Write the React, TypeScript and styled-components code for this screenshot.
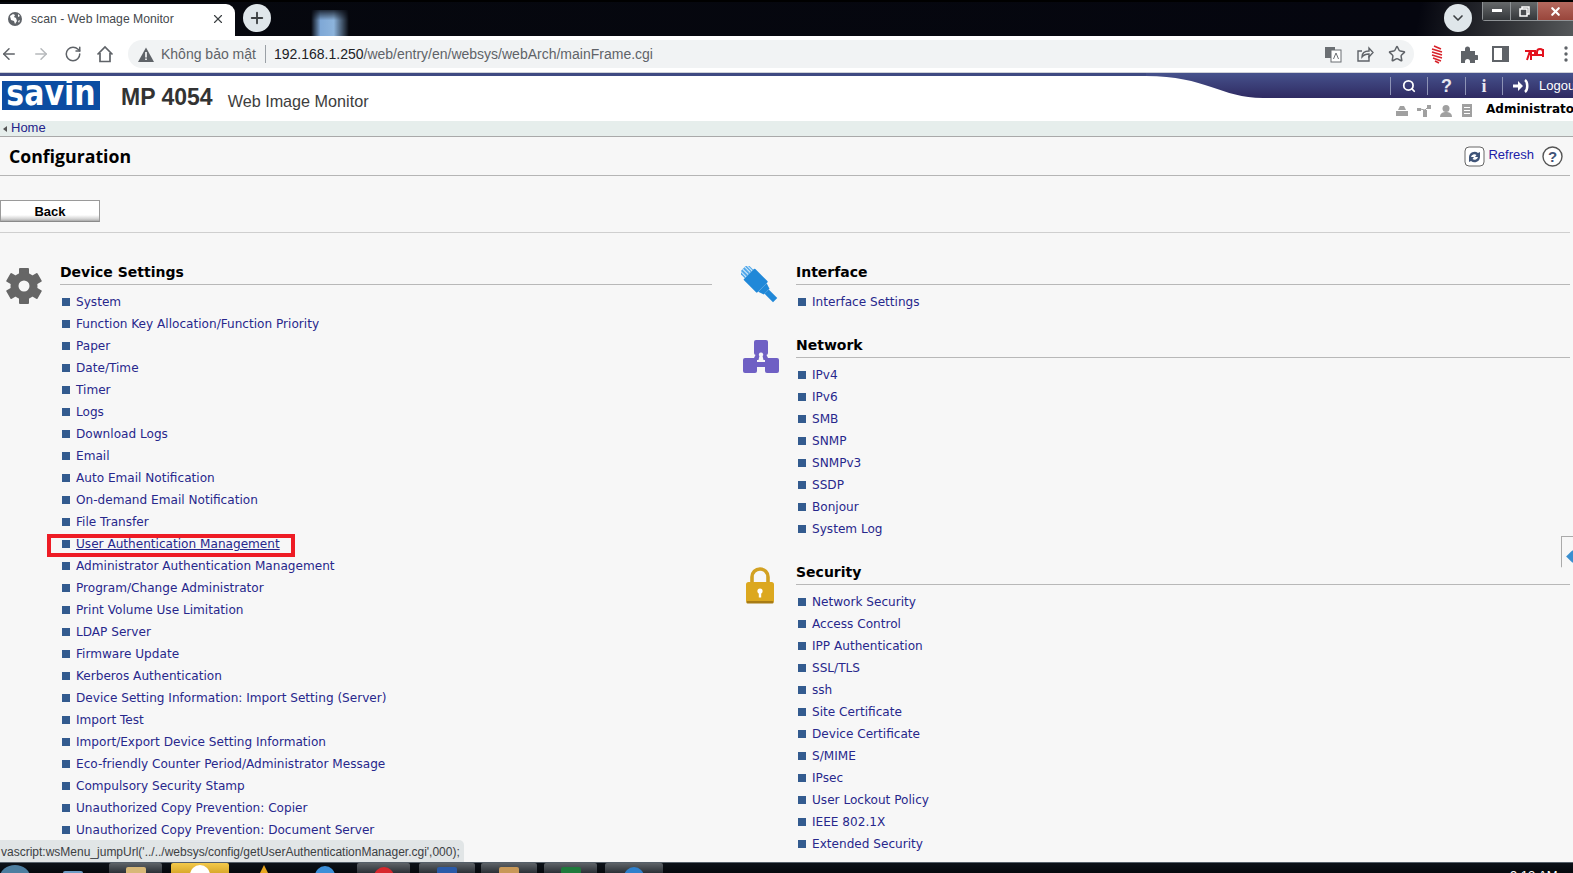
import React from "react";
import styled, { createGlobalStyle } from "styled-components";
import { ArrowLeft, ArrowRight, RotateCw, Star, X, Plus, ChevronDown, Search } from "lucide-react";

const Global = createGlobalStyle`
  html, body { margin: 0; padding: 0; background: #f7f7f7; }
  * { box-sizing: border-box; }
`;

const Screen = styled.div`
  position: relative;
  width: 1573px;
  height: 873px;
  overflow: hidden;
  display: flex;
  flex-direction: column;
  background: #f7f7f7;
  font-family: "DejaVu Sans", sans-serif;
`;

/* ---------- browser chrome ---------- */
const TabStrip = styled.div`
  position: relative;
  flex: 0 0 36px;
  display: flex;
  align-items: flex-end;
  background: linear-gradient(100deg, #06080e 0%, #05060f 90%, #3b3d40 97%, #55585a 100%);
  border-top: 2px solid #000;
`;
const Tab = styled.div`
  width: 235px;
  height: 32px;
  background: #fff;
  border-radius: 0 9px 0 0;
  display: flex;
  align-items: center;
  padding: 0 10px 2px 8px;
  gap: 9px;
  color: #45494d;
  font: 12.2px "Liberation Sans", sans-serif;
`;
const TabTitle = styled.span`
  flex: 1;
`;
const RoundButton = styled.div`
  width: 28px;
  height: 28px;
  border-radius: 50%;
  background: #dfe6ea;
  color: #3c4043;
  display: flex;
  align-items: center;
  justify-content: center;
  flex: none;
`;
const NewTab = styled(RoundButton)`
  margin: 0 0 4px 8px;
`;
const Smear = styled.div`
  width: 38px;
  height: 26px;
  margin-left: 40px;
  background: linear-gradient(90deg, rgba(60, 90, 130, 0) 0%, #7fa8d6 25%, #8db4dc 60%, rgba(60, 90, 130, 0) 100%);
  -webkit-mask-image: linear-gradient(rgba(0, 0, 0, 0.2), #000 40%);
  mask-image: linear-gradient(rgba(0, 0, 0, 0.2), #000 40%);
`;
const TabSpacer = styled.div`
  flex: 1;
`;
const CollapseTabs = styled(RoundButton)`
  margin: 0 10px 4px 0;
`;
const WindowControls = styled.div`
  align-self: flex-start;
  display: flex;
  margin-right: -2px;
  height: 19px;
  border: 1px solid #8f9396;
  border-top: 0;
  border-radius: 0 0 3px 3px;
`;
const WinButton = styled.div<{ $w: number; $close?: boolean }>`
  width: ${(p) => p.$w}px;
  display: flex;
  align-items: center;
  justify-content: center;
  border-right: 1px solid #8f9396;
  background: ${(p) => (p.$close ? "linear-gradient(#b5695e,#99463c)" : "linear-gradient(#66696b,#34373a)")};
  color: #fff;
`;
const Toolbar = styled.div`
  flex: 0 0 36px;
  background: #fff;
  display: flex;
  align-items: center;
  gap: 14px;
  color: #5f6368;
`;
const AddressPill = styled.div`
  flex: 0 0 1286px;
  height: 28px;
  border-radius: 14px;
  background: #f1f3f4;
  display: flex;
  align-items: center;
  padding: 0 8px 0 10px;
  font: 14px "Liberation Sans", sans-serif;
  color: #5f6368;
`;
const Warning = styled.span`
  margin-right: 7px;
  display: flex;
`;
const Divider = styled.span`
  width: 1px;
  height: 18px;
  background: #9aa0a6;
  margin: 0 8px 0 9px;
`;
const UrlHost = styled.span`
  color: #202124;
`;
const PillIcons = styled.div`
  margin-left: auto;
  display: flex;
  gap: 14px;
`;
const Kebab = styled.svg`
  margin-left: 4px;
  flex: none;
`;

/* ---------- printer header ---------- */
const Header = styled.header`
  position: relative;
  flex: 0 0 49px;
  background: #fff;
  border-top: 1px solid #cfd2d8;
  display: flex;
`;
const HeaderStripe = styled.div`
  position: absolute;
  left: 0;
  right: 0;
  top: 0;
  height: 3px;
  background: #3f4a82;
`;
const Swoosh = styled.svg`
  position: absolute;
  right: 0;
  top: 0;
`;
const Brand = styled.div`
  flex: 0 0 1390px;
  display: flex;
  align-items: center;
  padding: 0 0 4px 2px;
`;
const Logo = styled.div`
  width: 98px;
  height: 29px;
  background: #0c4da2;
  display: flex;
  align-items: center;
  justify-content: center;
`;
const LogoMark = styled.span`
  display: inline-block;
  color: #fff;
  font: bold 30px/24px "DejaVu Sans", sans-serif;
  transform: scaleY(1.2) translateY(-2px);
`;
const Model = styled.span`
  margin: 5px 0 0 21px;
  font: bold 23px "Liberation Sans", sans-serif;
  color: #333;
`;
const Product = styled.span`
  margin: 13px 0 0 15px;
  font: 16.2px "Liberation Sans", sans-serif;
  color: #3d3d3d;
`;
const HeaderRight = styled.div`
  position: relative;
  flex: none;
  width: 220px;
`;
const NavBand = styled.div`
  display: flex;
  align-items: center;
  height: 25px;
  color: #fff;
  font: 13px "Liberation Sans", sans-serif;
`;
const NavCell = styled.div<{ $w: number }>`
  width: ${(p) => p.$w}px;
  height: 18px;
  display: flex;
  align-items: center;
  justify-content: center;
  border-left: 1px solid #8d93b5;
  flex: none;
`;
const NavGlyph = styled.span<{ $serif?: boolean }>`
  font: bold 18px/18px ${(p) => (p.$serif ? '"Liberation Serif", serif' : '"Liberation Sans", sans-serif')};
  color: #e8e8f0;
`;
const LogoutCell = styled(NavCell)`
  justify-content: flex-start;
  gap: 10px;
  padding-left: 10px;
`;
const StatusRow = styled.div`
  display: flex;
  align-items: center;
  height: 21px;
  padding-left: 5px;
`;
const StatusIcons = styled.div`
  display: flex;
  align-items: center;
  gap: 8px;
  padding-top: 4px;
`;
const AdminLabel = styled.span`
  margin-left: 13px;
  font: bold 12px "DejaVu Sans", sans-serif;
  color: #000;
  white-space: nowrap;
`;

/* ---------- page ---------- */
const Crumb = styled.div`
  flex: 0 0 16px;
  background: #e6eeec;
  border-bottom: 1px solid #a9a9a9;
  display: flex;
  align-items: center;
  gap: 4px;
  padding: 0 0 1px 3px;
  color: #24248a;
  font: 13px/14px "Liberation Sans", sans-serif;
`;
const CrumbArrow = styled.span`
  width: 0;
  height: 0;
  border: 3px solid transparent;
  border-right: 4px solid #555;
  border-left: 0;
  margin-top: 2px;
`;
const Page = styled.div`
  width: 1570px;
  flex: 1;
  min-height: 0;
  display: flex;
  flex-direction: column;
`;
const TitleBar = styled.div`
  flex: 0 0 39px;
  border-bottom: 1px solid #b5b5b5;
  display: flex;
  align-items: center;
  padding: 0 7px 0 9px;
`;
const Title = styled.h1`
  margin: 0;
  font: bold 17.7px "Open Sans", sans-serif;
  color: #000;
  flex: 1;
`;
const RefreshLink = styled.a`
  margin: -3px 8px 0 3px;
  font: 13px "Liberation Sans", sans-serif;
  color: #2020a8;
`;
const BackBar = styled.div`
  flex: 0 0 57px;
  border-bottom: 1px solid #cfcfcf;
  padding-top: 24px;
`;
const BackButton = styled.button`
  display: block;
  width: 100px;
  height: 22px;
  padding: 0;
  border: 1px solid #9a9a9a;
  border-bottom-color: #8a8a8a;
  background: linear-gradient(#fff 0%, #fff 70%, #d2d2d2 90%, #a8a8a8 100%);
  font: bold 13px "Liberation Sans", sans-serif;
  color: #000;
`;
const Columns = styled.main`
  display: grid;
  grid-template-columns: 712px 1fr;
  column-gap: 24px;
  padding-top: 29px;
`;
const Column = styled.div`
  display: flex;
  flex-direction: column;
  gap: 22px;
`;
const Section = styled.section`
  display: grid;
  grid-template-columns: 60px 1fr;
`;
const IconSlot = styled.div<{ $pl: number; $pt: number }>`
  padding: ${(p) => p.$pt}px 0 0 ${(p) => p.$pl}px;
`;
const Heading = styled.h2`
  margin: 0 0 6px;
  height: 23px;
  border-bottom: 1px solid #b8b8b8;
  font: bold 14px/20px "DejaVu Sans", sans-serif;
  color: #000;
`;
const List = styled.ul`
  list-style: none;
  margin: 0;
  padding: 0;
`;
const Row = styled.li`
  position: relative;
  height: 22px;
  display: flex;
  align-items: center;
  padding-left: 2px;
  gap: 6px;
`;
const Bullet = styled.span`
  width: 8px;
  height: 8px;
  margin-top: -1px;
  background: #335b8f;
  flex: none;
`;
const RowLink = styled.a<{ $active?: boolean }>`
  font-size: 12.1px;
  color: #27278c;
  white-space: nowrap;
  text-decoration: ${(p) => (p.$active ? "underline" : "none")};
`;
const Highlight = styled.span`
  position: absolute;
  left: -13px;
  top: 1px;
  width: 248px;
  height: 23px;
  border: 4px solid #ee1c25;
`;

/* ---------- overlays ---------- */
const SideTab = styled.div`
  position: absolute;
  left: 1561px;
  top: 536px;
  width: 14px;
  height: 44px;
  border: 1px solid #aaa;
  border-right: 0;
  background: #f7f7f7;
  clip-path: polygon(0 0, 100% 0, 100% 100%, 0 70%);
`;
const SideMark = styled.span`
  position: absolute;
  left: 6px;
  top: 15px;
  width: 9px;
  height: 9px;
  background: #3a8fd0;
  transform: rotate(45deg);
`;
const LinkPreview = styled.div`
  position: absolute;
  left: 0;
  top: 840px;
  width: 464px;
  height: 22px;
  background: #e1e5e6;
  border-radius: 0 5px 0 0;
  padding: 1px 0 0 1px;
  display: flex;
  align-items: center;
  color: #3c4043;
  font: 12px "Liberation Sans", sans-serif;
  white-space: nowrap;
`;

/* ---------- taskbar ---------- */
const Taskbar = styled.footer`
  flex: 0 0 11px;
  background: linear-gradient(#0c1118, #05080c);
  border-top: 1px solid #56606a;
  display: flex;
  overflow: hidden;
  position: relative;
`;
const Orb = styled.span`
  width: 30px;
  height: 24px;
  margin-top: 2px;
  border-radius: 50%;
  background: #4d7ea0;
  flex: none;
`;
const TaskButton = styled.div<{ $x: number; $w: number; $active?: boolean; $plain?: boolean }>`
  margin-left: ${(p) => p.$x}px;
  width: ${(p) => p.$w}px;
  flex: none;
  display: flex;
  justify-content: center;
  background: ${(p) =>
    p.$plain ? "none" : p.$active ? "linear-gradient(#f3c94a,#d9a92c)" : "linear-gradient(#5e6368,#2b3036)"};
  border-radius: 2px 2px 0 0;
`;
const TaskGlyph = styled.span<{ $c: string; $round?: boolean; $peak?: boolean; $top?: number }>`
  display: block;
  width: 20px;
  height: 20px;
  margin-top: ${(p) => p.$top ?? 2}px;
  background: ${(p) => p.$c};
  border-radius: ${(p) => (p.$round ? "50%" : "2px")};
  clip-path: ${(p) => (p.$peak ? "polygon(50% 0, 100% 100%, 0 100%)" : "none")};
`;
const Clock = styled.span`
  position: absolute;
  left: 1510px;
  top: 5px;
  color: #fff;
  font: 13px "Liberation Sans", sans-serif;
`;

const Gear = () => (
  <svg width="36" height="36" viewBox="0 0 36 36">
    <g fill="#666">
      {[0, 60, 120, 180, 240, 300].map((a) => (
        <rect key={a} x="13" y="0" width="10" height="9" rx="1" transform={`rotate(${a} 18 18)`} />
      ))}
    </g>
    <circle cx="18" cy="18" r="9.5" fill="none" stroke="#666" strokeWidth="8" />
  </svg>
);

const Cable = () => (
  <svg width="40" height="40" viewBox="0 0 40 40">
    <g transform="rotate(-45 20 20)" fill="#2088d8">
      <rect x="14" y="-5" width="12" height="8" fill="#52a8ea" />
      <path d="M16-5v8M19-5v8M22-5v8M24.500-5v8" stroke="#d8ecfa" strokeWidth="1" />
      <rect x="12" y="3" width="16" height="19" rx="1" />
      <path d="M14 22h12l-2 6h-8z" />
      <rect x="17" y="28" width="6" height="12" />
    </g>
  </svg>
);

const NetworkIcon = () => (
  <svg width="36" height="34" viewBox="0 0 36 34">
    <g fill="#6f60c4">
      <rect x="11" y="0" width="14" height="15" rx="2" />
      <rect x="0" y="18" width="14" height="15" rx="2" />
      <rect x="22" y="18" width="14" height="15" rx="2" />
      <rect x="13" y="22" width="10" height="5" />
      <path d="M13 14h10l3 6H10z" />
    </g>
    <path d="M18 12.500a2.200 2.200 0 0 1 1.600 3.700L21 22h-6l1.400-5.800A2.200 2.200 0 0 1 18 12.500z" fill="#f7f7f7" />
  </svg>
);

const Lock = () => (
  <svg width="30" height="37" viewBox="0 0 30 37">
    <path d="M7 17V10a8 8 0 0 1 16 0v7" fill="none" stroke="#d2a122" strokeWidth="3.6" />
    <rect x="1" y="15" width="28" height="21" rx="2.5" fill="#dca81f" />
    <rect x="1.5" y="34" width="27" height="2.5" rx="1" fill="#a87c14" />
    <circle cx="15" cy="24" r="2.6" fill="#fff" />
    <rect x="13.8" y="24" width="2.4" height="6.5" fill="#fff" />
  </svg>
);

const LEFT = [
  "System", "Function Key Allocation/Function Priority", "Paper", "Date/Time", "Timer", "Logs", "Download Logs", "Email",
  "Auto Email Notification", "On-demand Email Notification", "File Transfer", "User Authentication Management",
  "Administrator Authentication Management", "Program/Change Administrator", "Print Volume Use Limitation", "LDAP Server",
  "Firmware Update", "Kerberos Authentication", "Device Setting Information: Import Setting (Server)", "Import Test",
  "Import/Export Device Setting Information", "Eco-friendly Counter Period/Administrator Message", "Compulsory Security Stamp",
  "Unauthorized Copy Prevention: Copier", "Unauthorized Copy Prevention: Document Server",
];
const NETWORK = ["IPv4", "IPv6", "SMB", "SNMP", "SNMPv3", "SSDP", "Bonjour", "System Log"];
const SECURITY = ["Network Security", "Access Control", "IPP Authentication", "SSL/TLS", "ssh", "Site Certificate", "Device Certificate", "S/MIME", "IPsec", "User Lockout Policy", "IEEE 802.1X", "Extended Security"];

const Links = ({ items, active }: { items: string[]; active?: string }) => (
  <List>
    {items.map((t) => (
      <Row key={t}>
        {t === active && <Highlight />}
        <Bullet />
        <RowLink $active={t === active}>{t}</RowLink>
      </Row>
    ))}
  </List>
);

export default function App() {
  return (
    <Screen>
      <Global />
      <TabStrip>
        <Tab>
          <svg width="14" height="14" viewBox="0 0 14 14"><circle cx="7" cy="7" r="7" fill="#5f6368" /><path d="M2 4l3-2 2 1-1 2 2 1 1 3-2 3-1-3-3-1zM10 2l2 2-2 1zM10 9l2-1-1 3z" fill="#fff" /></svg>
          <TabTitle>scan - Web Image Monitor</TabTitle>
          <X size={14} color="#3c4043" />
        </Tab>
        <NewTab><Plus size={18} strokeWidth={2.5} /></NewTab>
        <Smear />
        <TabSpacer />
        <CollapseTabs><ChevronDown size={16} strokeWidth={2.5} /></CollapseTabs>
        <WindowControls>
          <WinButton $w={28}><svg width="10" height="4"><rect width="10" height="3" fill="#fff" /></svg></WinButton>
          <WinButton $w={27}><svg width="11" height="11" viewBox="0 0 11 11" fill="none" stroke="#fff" strokeWidth="1.5"><rect x="3" y="1" width="7" height="7" /><rect x="1" y="3" width="7" height="7" fill="#4a4d50" /></svg></WinButton>
          <WinButton $w={36} $close><X size={13} strokeWidth={4} /></WinButton>
        </WindowControls>
      </TabStrip>

      <Toolbar>
        <ArrowLeft size={18} strokeWidth={2} />
        <ArrowRight size={18} strokeWidth={2} color="#b6b9bc" />
        <RotateCw size={18} strokeWidth={2} />
        <svg width="18" height="18" viewBox="0 0 18 18" fill="none" stroke="#5f6368" strokeWidth="1.7"><path d="M1.500 9.500 9 2l7.500 7.500M4 8v8.500h10V8" /></svg>
        <AddressPill>
          <Warning>
            <svg width="16" height="15" viewBox="0 0 16 15"><path d="M8 .5 16 15H0z" fill="#5f6368" /><path d="M7.2 5h1.600v5.500H7.200zM7.200 11.500h1.600V13H7.200z" fill="#fff" /></svg>
          </Warning>
          Không bảo mật
          <Divider />
          <span><UrlHost>192.168.1.250</UrlHost>/web/entry/en/websys/webArch/mainFrame.cgi</span>
          <PillIcons>
            <svg width="18" height="18" viewBox="0 0 18 18"><rect x="1" y="2" width="10" height="11" fill="#6b6f73" /><rect x="7" y="5" width="10" height="12" fill="#fff" stroke="#6b6f73" /><path d="M9.500 14l2.500-6 2.500 6" fill="none" stroke="#6b6f73" /></svg>
            <svg width="18" height="18" viewBox="0 0 18 18" fill="none" stroke="#5f6368" strokeWidth="1.4"><path d="M13 11v5H2V6h4" /><path d="M6 12c0-4 3-6 7-6V3l4 4.500L13 12V9c-3 0-5 .5-7 3z" /></svg>
            <Star size={18} strokeWidth={2} />
          </PillIcons>
        </AddressPill>
        <svg width="18" height="20" viewBox="0 0 18 20" fill="none" stroke="#d8222a" strokeWidth="1.6"><path d="M6 2l7 3M4 5l10 3M4 8l10 3M4 11l10 3M5 14l8 3M7 17l4 2" /></svg>
        <svg width="18" height="18" viewBox="0 0 18 18"><path d="M1 6h4V4a2.500 2.500 0 0 1 5 0v2h5v4h1.500a2.500 2.500 0 0 1 0 5H15v3H10v-1.500a2.500 2.500 0 0 0-5 0V18H1z" fill="#5f6368" /></svg>
        <svg width="18" height="16" viewBox="0 0 18 16" fill="none"><rect x="1" y="1" width="15" height="14" stroke="#5f6368" strokeWidth="2" /><rect x="10" y="1" width="6" height="14" fill="#5f6368" /></svg>
        <svg width="22" height="14" viewBox="0 0 22 14"><path d="M1 4h5L3 13M7 4v9M7 4h4v4H7M13 5a3 3 0 0 1 6 0v3h-6zM19 2v8" fill="none" stroke="#e3121e" strokeWidth="2" /></svg>
        <Kebab width="4" height="16" viewBox="0 0 4 16" fill="#5f6368"><circle cx="2" cy="2" r="1.700" /><circle cx="2" cy="8" r="1.700" /><circle cx="2" cy="14" r="1.700" /></Kebab>
      </Toolbar>

      <Header>
        <HeaderStripe />
        <Swoosh width="427" height="25" viewBox="0 0 427 25">
          <defs>
            <linearGradient id="band" x1="0" y1="0" x2="0" y2="1">
              <stop offset="0" stopColor="#46528c" />
              <stop offset="1" stopColor="#2f2a62" />
            </linearGradient>
          </defs>
          <path d="M0 0H427V25H117C75 25 60 3 0 3Z" fill="url(#band)" />
        </Swoosh>
        <Brand>
          <Logo><LogoMark>savin</LogoMark></Logo>
          <Model>MP 4054</Model>
          <Product>Web Image Monitor</Product>
        </Brand>
        <HeaderRight>
          <NavBand>
            <NavCell $w={37}><Search size={14} strokeWidth={3} /></NavCell>
            <NavCell $w={38}><NavGlyph>?</NavGlyph></NavCell>
            <NavCell $w={37}><NavGlyph $serif>i</NavGlyph></NavCell>
            <LogoutCell $w={108}>
              <svg width="16" height="14" viewBox="0 0 16 14" fill="#fff"><path d="M0 5.500h5V2l5 5-5 5V8.500H0z" /><path d="M12 1c3 2 3 10 0 12" fill="none" stroke="#fff" strokeWidth="2.500" /></svg>
              Logout
            </LogoutCell>
          </NavBand>
          <StatusRow>
            <StatusIcons>
              <svg width="14" height="12" viewBox="0 0 14 12" fill="#a0a0a0"><path d="M3 5l2-4h4l2 4z" /><rect x="1" y="6" width="12" height="5" /></svg>
              <svg width="14" height="12" viewBox="0 0 14 12" fill="#a0a0a0"><rect x="10" y="0" width="4" height="4" /><rect x="6" y="5" width="4" height="7" /><rect x="0" y="3" width="4" height="3" /><path d="M3 4l5 1 3-3" stroke="#a0a0a0" fill="none" /></svg>
              <svg width="14" height="12" viewBox="0 0 14 12" fill="#a0a0a0"><circle cx="7" cy="3.500" r="3.500" /><path d="M1 12c0-4 3-5 6-5s6 1 6 5z" /></svg>
              <svg width="12" height="13" viewBox="0 0 12 13" fill="#a0a0a0"><path d="M1 0h10v13H1zM3 3v1h6V3zm0 3v1h6V6zm0 3v1h6V9z" fillRule="evenodd" /></svg>
            </StatusIcons>
            <AdminLabel>Administrator</AdminLabel>
          </StatusRow>
        </HeaderRight>
      </Header>

      <Crumb><CrumbArrow />Home</Crumb>

      <Page>
        <TitleBar>
          <Title>Configuration</Title>
          <svg width="21" height="21" viewBox="0 0 21 21"><rect x="1" y="1" width="19" height="19" rx="4" fill="#fff" stroke="#666" /><path d="M5 11a5.500 5.500 0 0 1 9-4l2-1v5h-5l1.500-2a3.500 3.500 0 0 0-5.500 2zM16 11a5.500 5.500 0 0 1-9 4l-2 1v-5h5l-1.500 2a3.500 3.500 0 0 0 5.500-2z" fill="#3f5478" /></svg>
          <RefreshLink>Refresh</RefreshLink>
          <svg width="21" height="21" viewBox="0 0 21 21"><circle cx="10.500" cy="10.500" r="9.500" fill="#fff" stroke="#555" strokeWidth="1.400" /><text x="10.500" y="16" textAnchor="middle" fontFamily="Liberation Sans" fontWeight="bold" fontSize="15" fill="#3f5478">?</text></svg>
        </TitleBar>
        <BackBar><BackButton>Back</BackButton></BackBar>
        <Columns>
          <Column>
            <Section>
              <IconSlot $pl={6} $pt={6}><Gear /></IconSlot>
              <div>
                <Heading>Device Settings</Heading>
                <Links items={LEFT} active="User Authentication Management" />
              </div>
            </Section>
          </Column>
          <Column>
            <Section>
              <IconSlot $pl={5} $pt={4}><Cable /></IconSlot>
              <div>
                <Heading>Interface</Heading>
                <Links items={["Interface Settings"]} />
              </div>
            </Section>
            <Section>
              <IconSlot $pl={7} $pt={5}><NetworkIcon /></IconSlot>
              <div>
                <Heading>Network</Heading>
                <Links items={NETWORK} />
              </div>
            </Section>
            <Section>
              <IconSlot $pl={9} $pt={5}><Lock /></IconSlot>
              <div>
                <Heading>Security</Heading>
                <Links items={SECURITY} />
              </div>
            </Section>
          </Column>
        </Columns>
      </Page>

      <SideTab><SideMark /></SideTab>
      <LinkPreview>vascript:wsMenu_jumpUrl('../../websys/config/getUserAuthenticationManager.cgi',000);</LinkPreview>

      <Taskbar>
        <Orb />
        <TaskButton $x={32} $w={21} $plain><TaskGlyph $c="#6d9cc4" $top={8} /></TaskButton>
        <TaskButton $x={26} $w={53}><TaskGlyph $c="#d8b878" $top={4} /></TaskButton>
        <TaskButton $x={9} $w={58} $active><TaskGlyph $c="#fff" $round /></TaskButton>
        <TaskButton $x={19} $w={32} $plain><TaskGlyph $c="#e8a820" $peak /></TaskButton>
        <TaskButton $x={32} $w={25} $plain><TaskGlyph $c="#3c8fd8" $round $top={3} /></TaskButton>
        <TaskButton $x={20} $w={53}><TaskGlyph $c="#d8272d" $round $top={4} /></TaskButton>
        <TaskButton $x={9} $w={56}><TaskGlyph $c="#2a5aa8" $top={4} /></TaskButton>
        <TaskButton $x={6} $w={56}><TaskGlyph $c="#c89858" $top={4} /></TaskButton>
        <TaskButton $x={7} $w={53}><TaskGlyph $c="#1f7a3c" $top={4} /></TaskButton>
        <TaskButton $x={8} $w={58}><TaskGlyph $c="#2f80cc" $round $top={4} /></TaskButton>
        <Clock>9:13 AM</Clock>
      </Taskbar>
    </Screen>
  );
}
